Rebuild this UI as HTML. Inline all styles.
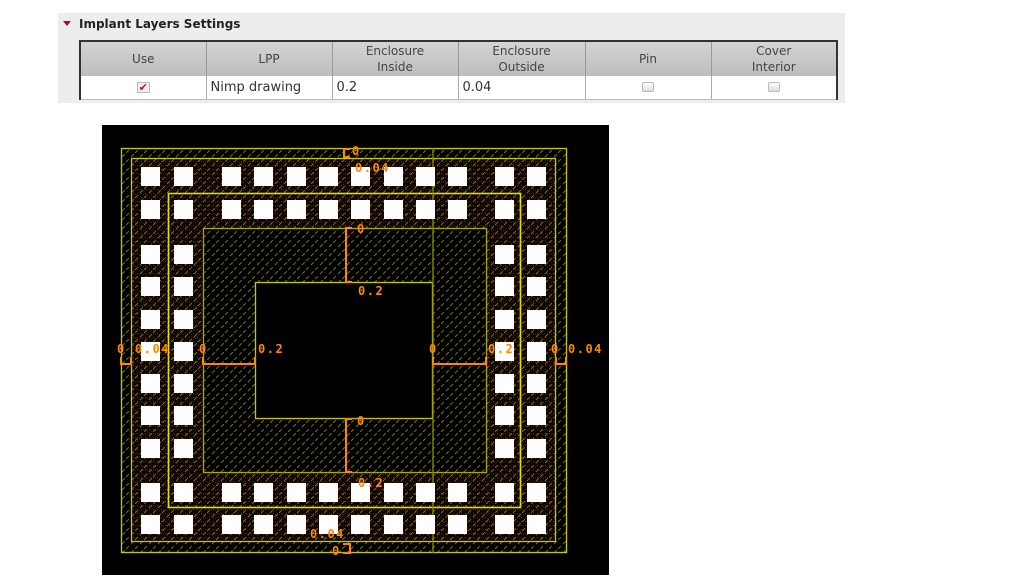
<!DOCTYPE html>
<html><head><meta charset="utf-8"><style>
*{margin:0;padding:0;box-sizing:border-box}
body{width:1013px;height:582px;background:#fff;position:relative;overflow:hidden;font-family:"DejaVu Sans","Liberation Sans",sans-serif}
#panel{position:absolute;left:58px;top:13px;width:787px;height:90px;background:#ededed}
#title{position:absolute;left:79px;top:17px;font-size:12px;font-weight:bold;color:#222}
#tri{position:absolute;left:63px;top:21px;width:0;height:0;border-left:4px solid transparent;border-right:4px solid transparent;border-top:5px solid #b01010}
table{position:absolute;left:79px;top:40px;border-collapse:collapse;border:2px solid #333;border-bottom:none;font-size:12px;color:#444}
th{background:linear-gradient(#d4d4d4,#bdbdbd);font-weight:normal;height:35px;border-right:1px solid #999;line-height:16px;color:#444}
td{background:#fff;height:23px;border-right:1px solid #aaa;border-bottom:1px solid #bbb;padding-left:4px;font-size:13px;color:#333}
.cb{display:block;margin:0 auto;width:12px;height:10px;border:1px solid #bbb;background:linear-gradient(#fff,#ddd);border-radius:2px}
</style></head><body>
<div id="panel"></div>
<div id="tri"></div>
<div id="title">Implant Layers Settings</div>
<table>
<tr><th style="width:126px">Use</th><th style="width:126px">LPP</th><th style="width:126px">Enclosure<br>Inside</th><th style="width:127px">Enclosure<br>Outside</th><th style="width:126px">Pin</th><th style="width:126px">Cover<br>Interior</th></tr>
<tr><td style="text-align:center;padding:0"><span style="color:#c01818;font-weight:bold;display:inline-block;border:1px solid #bbb;background:#eee;width:13px;height:11px;line-height:10px;font-size:11px">✔</span></td><td>Nimp drawing</td><td>0.2</td><td>0.04</td><td style="padding:0"><span class="cb"></span></td><td style="padding:0"><span class="cb"></span></td></tr>
</table>
<svg style="position:absolute;left:0;top:0" width="1013" height="582">
<defs>
<pattern id="h" width="9" height="9" patternUnits="userSpaceOnUse">
<line x1="0" y1="9" x2="9" y2="0" stroke="#7a7a00" stroke-width="1" stroke-dasharray="4,3"/>
</pattern>
<pattern id="r" width="4" height="4" patternUnits="userSpaceOnUse">
<rect width="4" height="4" fill="#100300"/><rect x="1" y="1" width="1" height="1" fill="#901808"/><rect x="3" y="2" width="1" height="1" fill="#4a1400"/>
</pattern>
<g id="row">
<rect x="141" y="0" width="19" height="19"/><rect x="174" y="0" width="19" height="19"/><rect x="222" y="0" width="19" height="19"/><rect x="254" y="0" width="19" height="19"/><rect x="287" y="0" width="19" height="19"/><rect x="319" y="0" width="19" height="19"/><rect x="351" y="0" width="19" height="19"/><rect x="384" y="0" width="19" height="19"/><rect x="416" y="0" width="19" height="19"/><rect x="448" y="0" width="19" height="19"/><rect x="495" y="0" width="19" height="19"/><rect x="527" y="0" width="19" height="19"/>
</g>
<g id="side"><rect x="141" y="0" width="19" height="19"/><rect x="174" y="0" width="19" height="19"/><rect x="495" y="0" width="19" height="19"/><rect x="527" y="0" width="19" height="19"/></g>
</defs>
<rect x="102" y="125" width="507" height="450" fill="#000"/>
<rect x="121" y="148" width="446" height="405" fill="#000"/>
<rect x="121" y="148" width="446" height="405" fill="url(#h)"/>
<rect x="131" y="158" width="425" height="384" fill="url(#r)"/>
<rect x="131" y="158" width="425" height="384" fill="url(#h)"/>
<rect x="203" y="228" width="284" height="245" fill="#000"/>
<rect x="203" y="228" width="284" height="245" fill="url(#h)"/>
<rect x="255" y="282" width="178" height="137" fill="#000"/>
<g fill="none" stroke="#c8c800" stroke-width="1.3">
<rect x="121.5" y="148.5" width="445" height="404"/>
<rect x="131.5" y="158.5" width="424" height="383"/>
<rect x="168.5" y="193.5" width="352" height="314" stroke="#e0e000" stroke-width="1.6"/>
<rect x="203.5" y="228.5" width="283" height="244" stroke="#a8a800"/>
<rect x="255.5" y="282.5" width="177" height="136"/>
<line x1="433" y1="148" x2="433" y2="553" stroke="#8a8a00"/>
</g>
<g fill="#fff">
<use href="#row" y="167"/><use href="#row" y="200"/><use href="#row" y="483"/><use href="#row" y="515"/>
<use href="#side" y="245"/><use href="#side" y="277"/><use href="#side" y="310"/><use href="#side" y="342"/><use href="#side" y="374"/><use href="#side" y="406"/><use href="#side" y="439"/>
</g>
<g fill="none" stroke="#ff8800" stroke-width="2">
<polyline points="350,149 344,149 344,157 350,157"/>
<polyline points="352,228 346,228 346,282 352,282"/>
<polyline points="352,419 346,419 346,472 352,472"/>
<polyline points="203,357 203,364 255,364 255,357"/>
<polyline points="433,357 433,364 486,364 486,357"/>
<polyline points="121,357 121,364 131,364 131,357"/>
<polyline points="556,357 556,364 566,364 566,357"/>
<polyline points="343,544 350,544 350,553 343,553"/>
</g>
<g fill="#ff8800" font-family="DejaVu Sans Mono,monospace" font-size="12" font-weight="bold" letter-spacing="1.5">
<text x="352" y="155">0</text><text x="355" y="172">0.04</text>
<text x="357" y="233">0</text><text x="358" y="295">0.2</text>
<text x="357" y="425">0</text><text x="358" y="487">0.2</text>
<text x="117" y="353">0</text><text x="135" y="353">0.04</text>
<text x="199" y="353">0</text><text x="258" y="353">0.2</text>
<text x="429" y="353">0</text><text x="488" y="353">0.2</text>
<text x="551" y="353">0</text><text x="568" y="353">0.04</text>
<text x="310" y="538">0.04</text><text x="332" y="555">0</text>
</g>
</svg>
</body></html>
